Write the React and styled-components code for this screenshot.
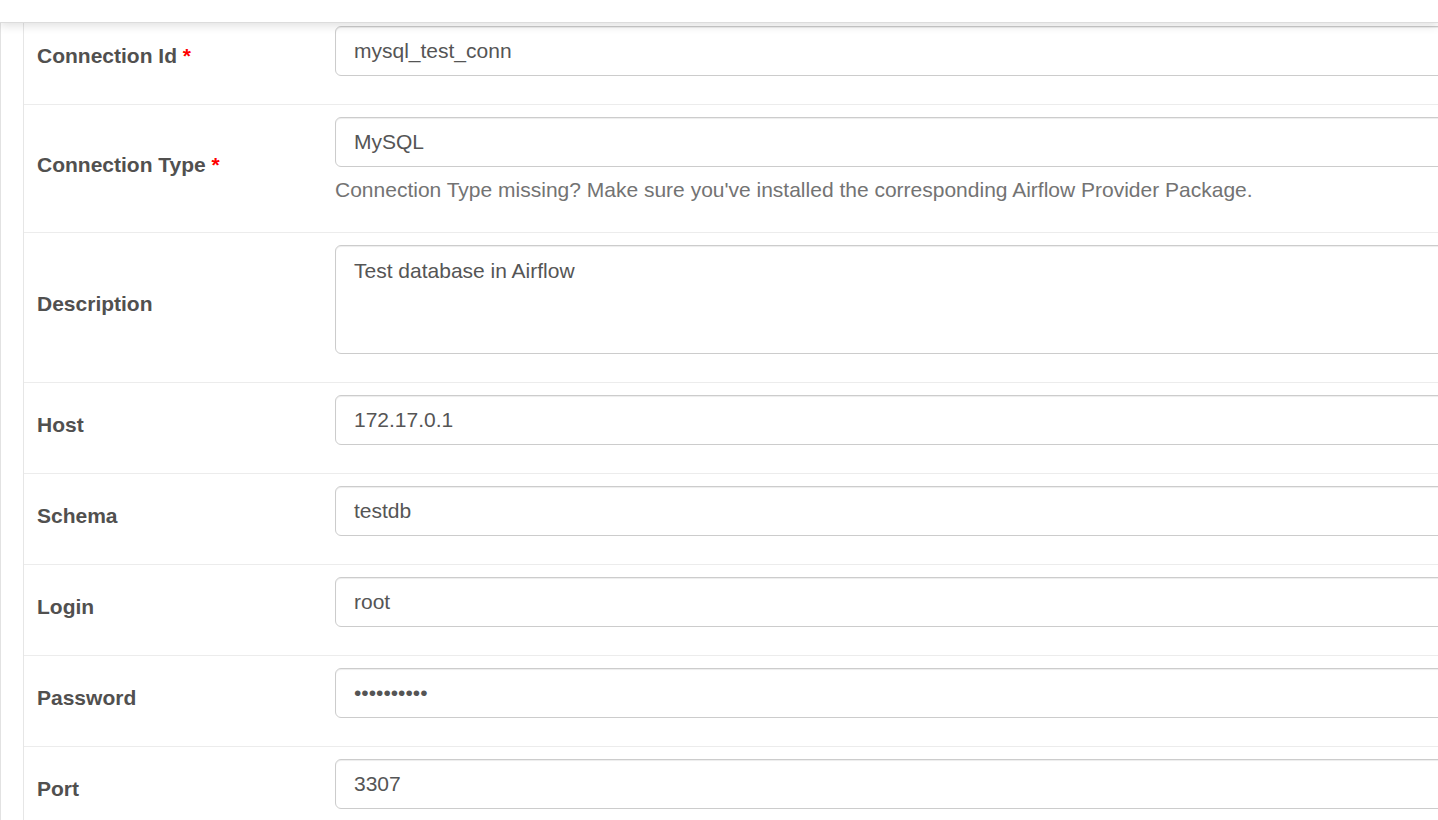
import styled, { createGlobalStyle } from "styled-components";

const GlobalStyle = createGlobalStyle`
    html, body {
        margin: 0;
        background: #fff;
        overflow: hidden;
    }
    body {
        font-family: "Liberation Sans", Arial, Helvetica, sans-serif;
        color: #51504f;
    }
`

const fields = [
    { label: "Connection Id", value: "mysql_test_conn", required: true },
    { label: "Connection Type", value: "MySQL", required: true, help: "Connection Type missing? Make sure you've installed the corresponding Airflow Provider Package." },
    { label: "Description", value: "Test database in Airflow", multiline: true },
    { label: "Host", value: "172.17.0.1" },
    { label: "Schema", value: "testdb" },
    { label: "Login", value: "root" },
    { label: "Password", value: "••••••••••" },
    { label: "Port", value: "3307" },
]

export default function App() {
    return (
        <>
            <GlobalStyle />
            <Navbar />
            <Page>
                <FormTable>
                    {fields.map((f, i) => (
                        <Row key={f.label} first={i === 0}>
                            <LabelCell>
                                {f.label}
                                {f.required && <Required> *</Required>}
                            </LabelCell>
                            <ValueCell>
                                <Field multiline={f.multiline}>{f.value}</Field>
                                {f.help && <HelpBlock>{f.help}</HelpBlock>}
                            </ValueCell>
                        </Row>
                    ))}
                </FormTable>
            </Page>
        </>
    )
}

const Navbar = styled.header`
    position: fixed;
    top: 0;
    left: 0;
    right: 0;
    height: 22px;
    background: #fff;
    border-bottom: 1px solid #dcdcdc;
    box-shadow: 0 3px 10px rgba(0, 0, 0, 0.12);
    z-index: 10;
`

const Page = styled.main`
    min-height: 100vh;
    padding: 14px 0 0 22px;
    border-left: 1px solid #e2e2e2;
`

const FormTable = styled.div`
    width: 1600px;
    border-left: 1px solid #e6e6e6;
`

const Row = styled.div`
    display: grid;
    grid-template-columns: 299px 1fr;
    border-top: ${p => (p.first ? "none" : "1px solid #ececec")};
`

const LabelCell = styled.div`
    display: flex;
    align-items: center;
    padding: 0 12px 7px 13px;
    font-size: 21px;
    font-weight: bold;
    color: #51504f;
`

const Required = styled.span`
    color: red;
    white-space: pre;
`

const ValueCell = styled.div`
    padding: 12px 12px 28px 12px;
`

const Field = styled.div`
    box-sizing: border-box;
    height: ${p => (p.multiline ? "109px" : "50px")};
    padding: ${p => (p.multiline ? "10px 18px" : "0 18px 1px")};
    display: flex;
    align-items: ${p => (p.multiline ? "flex-start" : "center")};
    border: 1px solid #ccc;
    border-radius: 6px;
    box-shadow: inset 0 1px 1px rgba(0, 0, 0, 0.075);
    background: #fff;
    font-size: 21px;
    line-height: 30px;
    color: #555;
`

const HelpBlock = styled.p`
    margin: 8px 0 0;
    font-size: 21px;
    line-height: 29px;
    color: #737373;
`
